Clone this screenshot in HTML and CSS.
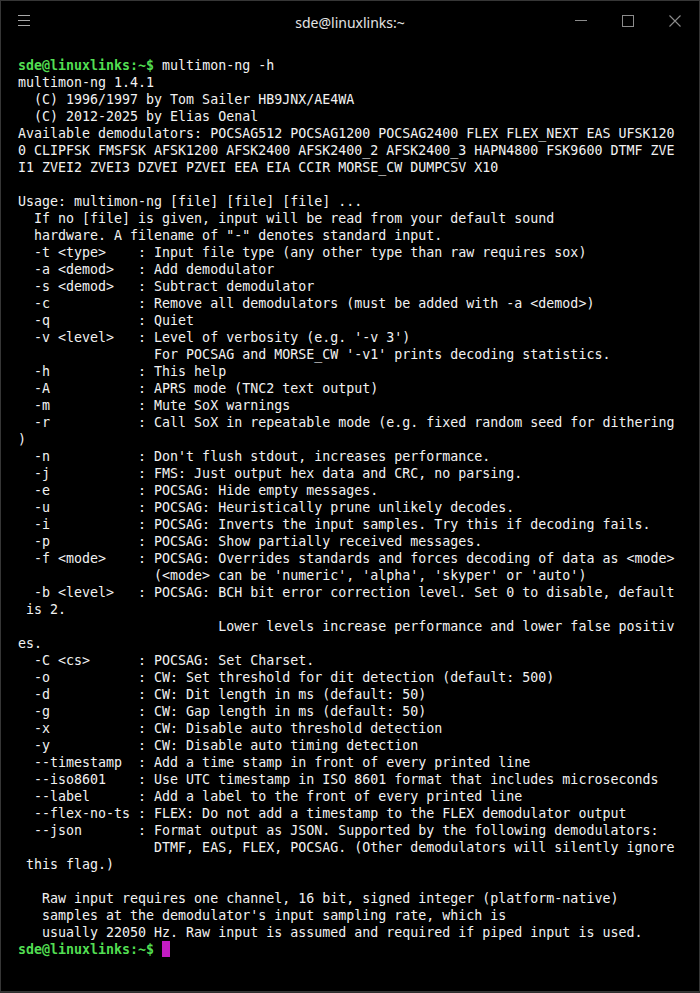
FILE: index.html
```html
<!DOCTYPE html>
<html lang="en">
<head>
<meta charset="utf-8">
<title>sde@linuxlinks:~</title>
<link rel="stylesheet" href="styles.css">
</head>
<body>
<div class="window">
  <header class="titlebar">
    <div class="tb-left">
      <svg class="icon" width="13" height="12" viewBox="0 0 13 12"><path d="M0 0.5H12M0 5.5H12M0 10.5H12" stroke="#a8a8a8" stroke-width="1" fill="none"/></svg>
    </div>
    <div class="title">sde@linuxlinks:~</div>
    <div class="tb-right">
      <svg class="icon" width="12" height="12" viewBox="0 0 12 12"><path d="M0 5.5H12" stroke="#8c8c8c" stroke-width="1" fill="none"/></svg>
      <svg class="icon" width="12" height="12" viewBox="0 0 12 12"><rect x="0.5" y="0.5" width="11" height="11" stroke="#8c8c8c" stroke-width="1" fill="none"/></svg>
      <svg class="icon" width="12" height="12" viewBox="0 0 12 12"><path d="M0.5 0.5L11.5 11.5M11.5 0.5L0.5 11.5" stroke="#8c8c8c" stroke-width="1.1" fill="none"/></svg>
    </div>
  </header>
<pre class="term"><span class="prompt">sde@linuxlinks:~$</span> multimon-ng -h
multimon-ng 1.4.1
  (C) 1996/1997 by Tom Sailer HB9JNX/AE4WA
  (C) 2012-2025 by Elias Oenal
Available demodulators: POCSAG512 POCSAG1200 POCSAG2400 FLEX FLEX_NEXT EAS UFSK120
0 CLIPFSK FMSFSK AFSK1200 AFSK2400 AFSK2400_2 AFSK2400_3 HAPN4800 FSK9600 DTMF ZVE
I1 ZVEI2 ZVEI3 DZVEI PZVEI EEA EIA CCIR MORSE_CW DUMPCSV X10

Usage: multimon-ng [file] [file] [file] ...
  If no [file] is given, input will be read from your default sound
  hardware. A filename of "-" denotes standard input.
  -t &lt;type&gt;    : Input file type (any other type than raw requires sox)
  -a &lt;demod&gt;   : Add demodulator
  -s &lt;demod&gt;   : Subtract demodulator
  -c           : Remove all demodulators (must be added with -a &lt;demod&gt;)
  -q           : Quiet
  -v &lt;level&gt;   : Level of verbosity (e.g. '-v 3')
                 For POCSAG and MORSE_CW '-v1' prints decoding statistics.
  -h           : This help
  -A           : APRS mode (TNC2 text output)
  -m           : Mute SoX warnings
  -r           : Call SoX in repeatable mode (e.g. fixed random seed for dithering
)
  -n           : Don't flush stdout, increases performance.
  -j           : FMS: Just output hex data and CRC, no parsing.
  -e           : POCSAG: Hide empty messages.
  -u           : POCSAG: Heuristically prune unlikely decodes.
  -i           : POCSAG: Inverts the input samples. Try this if decoding fails.
  -p           : POCSAG: Show partially received messages.
  -f &lt;mode&gt;    : POCSAG: Overrides standards and forces decoding of data as &lt;mode&gt;
                 (&lt;mode&gt; can be 'numeric', 'alpha', 'skyper' or 'auto')
  -b &lt;level&gt;   : POCSAG: BCH bit error correction level. Set 0 to disable, default
 is 2.
                         Lower levels increase performance and lower false positiv
es.
  -C &lt;cs&gt;      : POCSAG: Set Charset.
  -o           : CW: Set threshold for dit detection (default: 500)
  -d           : CW: Dit length in ms (default: 50)
  -g           : CW: Gap length in ms (default: 50)
  -x           : CW: Disable auto threshold detection
  -y           : CW: Disable auto timing detection
  --timestamp  : Add a time stamp in front of every printed line
  --iso8601    : Use UTC timestamp in ISO 8601 format that includes microseconds
  --label      : Add a label to the front of every printed line
  --flex-no-ts : FLEX: Do not add a timestamp to the FLEX demodulator output
  --json       : Format output as JSON. Supported by the following demodulators:
                 DTMF, EAS, FLEX, POCSAG. (Other demodulators will silently ignore
 this flag.)

   Raw input requires one channel, 16 bit, signed integer (platform-native)
   samples at the demodulator's input sampling rate, which is
   usually 22050 Hz. Raw input is assumed and required if piped input is used.
<span class="prompt">sde@linuxlinks:~$</span> <span class="cursor"> </span></pre>
</div>
</body>
</html>
```
FILE: styles.css
```css
html, body {
  margin: 0;
  padding: 0;
  background: #2f2f2f;
}

.window {
  width: 700px;
  height: 992px;
  box-sizing: border-box;
  border: 1px solid #363636;
  background: #000000;
  overflow: hidden;
  display: flex;
  flex-direction: column;
}

.titlebar {
  height: 40px;
  flex: none;
  display: grid;
  grid-template-columns: 124px 1fr 124px;
  align-items: center;
  background: #000000;
}

.tb-left {
  padding-left: 17px;
  display: flex;
  align-items: center;
  padding-bottom: 1px;
}

.tb-right {
  display: flex;
  align-items: center;
  gap: 35px;
  padding-bottom: 1px;
}

.icon {
  display: block;
}

.title {
  text-align: center;
  font-family: "Noto Sans", "Open Sans", sans-serif;
  font-size: 14px;
  color: #e4e4e4;
  padding-top: 3px;
}

.term {
  margin: 0;
  padding: 16px 0 0 17px;
  font-family: "DejaVu Sans Mono", monospace;
  font-size: 13.3px;
  line-height: 17px;
  color: #f2f2f2;
  white-space: pre;
}

.prompt {
  color: #52de52;
  font-weight: bold;
}

.cursor {
  display: inline-block;
  width: 8px;
  height: 16px;
  vertical-align: top;
  background: #c21cc2;
}
```
